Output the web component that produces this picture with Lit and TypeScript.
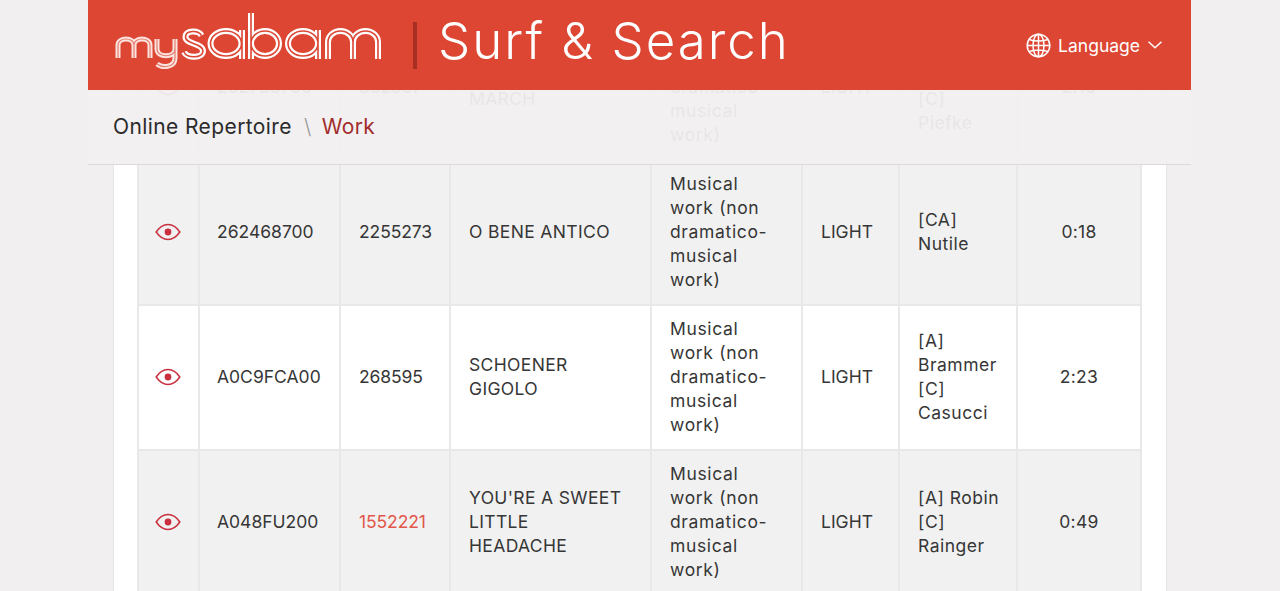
import { LitElement, html, css, svg } from "lit";
import { customElement } from "lit/decorators.js";

const eye = html`<svg class="eye" viewBox="0 0 26 18" width="26" height="18"><path d="M1.200 9C4.200 4.600 8.300 1.600 13 1.600s8.800 3 11.800 7.400c-3 4.400-7.100 7.400-11.800 7.400S4.200 13.400 1.200 9z" fill="none" stroke="#c9303f" stroke-width="1.500"/><circle cx="13" cy="9" r="3.400" fill="#c9303f"/></svg>`;

const myPaths = svg`
  <path d="M118 58V45c0-8 16-8 16 0v13M134 45c0-8 16-8 16 0v13"/>
  <path d="M157 39v10c0 9 18 9 18 0V39M175 47v11c0 10-13 10-18 6"/>
`;
const sabamPaths = svg`
  <path d="M201.500 35.500c-3-5.500-16-5.500-16 1.500 0 7.500 17.500 6 17.500 14 0 7.500-16 7.500-19 1"/>
  <path d="M242 30v29M241.500 43.500a15.500 12.500 0 1 1-31 0 15.500 12.500 0 1 1 31 0z"/>
  <path d="M251 13v46M251 43.500a14 12.500 0 1 0 28 0 14 12.500 0 1 0-28 0z"/>
  <path d="M318 30v29M318 43.500a15 12.500 0 1 1-30 0 15 12.500 0 1 1 30 0z"/>
  <path d="M328 59V42a12.500 11 0 0 1 25 0v17M353 42a12.500 11 0 0 1 25 0v17"/>
`;

const rows = [
  { id: "262783700", code: "882567", title: ["RADETZKY", "MARCH"], genre: "LIGHT", auth: ["[A]", "Strauss", "[C]", "Piefke"], dur: "2:16", odd: false },
  { id: "262468700", code: "2255273", title: ["O BENE ANTICO"], genre: "LIGHT", auth: ["[CA]", "Nutile"], dur: "0:18", odd: true },
  { id: "A0C9FCA00", code: "268595", title: ["SCHOENER", "GIGOLO"], genre: "LIGHT", auth: ["[A]", "Brammer", "[C]", "Casucci"], dur: "2:23", odd: false },
  { id: "A048FU200", code: "1552221", link: true, title: ["YOU'RE A SWEET", "LITTLE", "HEADACHE"], genre: "LIGHT", auth: ["[A] Robin", "[C]", "Rainger"], dur: "0:49", odd: true },
];

@customElement("app-root")
export class AppRoot extends LitElement {
  static styles = css`
    :host { display: block; height: 591px; overflow: hidden; position: relative; background: #f1eff0; font-family: Inter, "Liberation Sans", sans-serif; color: #363636; }
    .card { margin: 0 114px 0 113px; background: #fff; padding: 14px 23px 0; height: 700px; border-left: 1px solid #e6e6e6; border-right: 1px solid #e6e6e6; box-sizing: border-box; width: 1054px; }
    table { border-collapse: collapse; table-layout: fixed; width: 1003px; font-size: 17.500px; line-height: 24px; }
    td { border: 2px solid #e8e8e8; padding: 0 18px 1px; height: 145px; box-sizing: border-box; vertical-align: middle; }
    tr.odd td { background: #f1f1f1; }
    col.c1 { width: 61px; } col.c2 { width: 141px; } col.c3 { width: 110px; } col.c4 { width: 201px; }
    col.c5 { width: 151px; } col.c6 { width: 97px; } col.c7 { width: 118px; } col.c8 { width: 124px; }
    td.ic { padding: 0 2px 1px 0; text-align: center; }
    td.id { padding-left: 17px; }
    .eye { display: block; margin: 0 auto; }
    td.dur { text-align: center; padding: 0 0 1px; letter-spacing: 0.3px; }
    td.code { letter-spacing: -0.1px; }
    td.title { letter-spacing: 0.35px; }
    td.prose { letter-spacing: 0.65px; white-space: nowrap; }
    td.auth { letter-spacing: 0.5px; white-space: nowrap; padding-left: 18px; }
    .link { color: #e2574a; }
    .bar { position: absolute; top: 0; left: 88px; width: 1103px; }
    .top { height: 90px; background: #dc4633; display: flex; align-items: center; color: #fff; box-sizing: border-box; padding-right: 29px; }
    .logo { display: block; flex: none; }
    .logo .o { fill: none; stroke: #fff; stroke-width: 6; }
    .logo .i { fill: none; stroke: #dc4633; stroke-width: 1.600; }
    .logo .om { fill: none; stroke: #fbe3df; stroke-width: 5; }
    .logo .im { fill: none; stroke: #e77f70; stroke-width: 1.200; }
    .div { width: 4px; height: 47px; background: #a82e24; margin: 0 21px 0 0; flex: none; }
    h1 { margin: 0; font-weight: 300; font-size: 51px; letter-spacing: 2px; line-height: 1; flex: 1; padding-bottom: 9px; }
    .lang { display: flex; align-items: center; font-size: 17.500px; }
    .globe { margin-right: 7px; }
    .chev { margin-left: 8px; }
    .crumb { height: 75px; background: rgba(241, 239, 240, 0.95); border-bottom: 1px solid #dcdbdc; box-sizing: border-box; display: flex; align-items: center; padding-left: 25px; font-size: 21px; color: #2b2b2b; letter-spacing: 0.4px; padding-bottom: 2px; }
    .sep { color: #999; margin: 0 10px 0 12px; font-weight: 300; }
    .cur { color: #a32c2c; }
  `;
  render() {
    return html`
      <div class="card">
        <table>
          <colgroup>${[1, 2, 3, 4, 5, 6, 7, 8].map((n) => html`<col class="c${n}" />`)}</colgroup>
          <tbody>
            ${rows.map((r) => html`
              <tr class=${r.odd ? "odd" : ""}>
                <td class="ic">${eye}</td>
                <td class="id">${r.id}</td>
                <td class="code ${r.link ? "link" : ""}">${r.code}</td>
                <td class="title">${r.title.map((t) => html`${t}<br />`)}</td>
                <td class="prose">Musical<br />work (non<br />dramatico-<br />musical<br />work)</td>
                <td>${r.genre}</td>
                <td class="auth">${r.auth.map((t) => html`${t}<br />`)}</td>
                <td class="dur">${r.dur}</td>
              </tr>`)}
          </tbody>
        </table>
      </div>
      <header class="bar">
        <div class="top">
          <svg class="logo" width="325" height="90" viewBox="88 0 325 90" role="img" aria-label="mySABAM">
            <g class="om">${myPaths}</g>
            <g class="im">${myPaths}</g>
            <g class="o">${sabamPaths}</g>
            <g class="i">${sabamPaths}</g>
          </svg>
          <div class="div"></div>
          <h1>Surf &amp; Search</h1>
          <div class="lang">
            <svg class="globe" width="25" height="25" viewBox="0 0 25 25" fill="none" stroke="#fff" stroke-width="1.500"><circle cx="12.500" cy="12.500" r="11.300"/><ellipse cx="12.500" cy="12.500" rx="5.500" ry="11.300"/><path d="M12.500 1.200v22.600M3 6.500c6 2 13 2 19 0M1.200 12.500h22.600M3 18.500c6-2 13-2 19 0"/></svg>
            <span>Language</span>
            <svg class="chev" width="14" height="8" viewBox="0 0 14 8" fill="none" stroke="#fff" stroke-width="1.500"><path d="M.5.700l6.500 6 6.500-6"/></svg>
          </div>
        </div>
        <nav class="crumb"><span>Online Repertoire</span><span class="sep">\\</span><span class="cur">Work</span></nav>
      </header>
    `;
  }
}
